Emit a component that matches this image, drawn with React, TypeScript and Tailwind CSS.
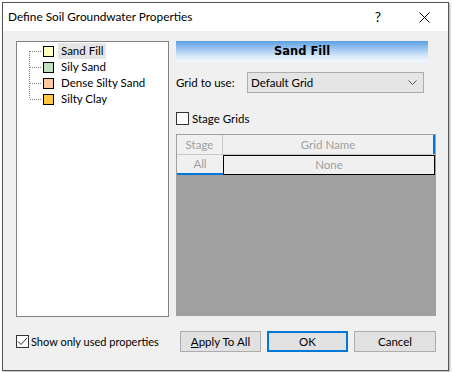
import React from "react";

const F = { fontFamily: 'Lato, "Noto Sans", sans-serif' };

const items = [
  { name: "Sand Fill", color: "#ffffc0", sel: true },
  { name: "Sily Sand", color: "#c0e0c0" },
  { name: "Dense Silty Sand", color: "#ffc8a0" },
  { name: "Silty Clay", color: "#ffc840" },
];

function Connector({ first, last }: { first: boolean; last: boolean }) {
  return (
    <svg width="26" height="16" className="shrink-0">
      <line
        x1="12.5"
        y1={first ? 8 : 0}
        x2="12.5"
        y2={last ? 8 : 16}
        stroke="#808080"
        strokeWidth="1"
        strokeDasharray="1 1"
      />
      <line x1="13" y1="8.5" x2="25" y2="8.5" stroke="#808080" strokeWidth="1" strokeDasharray="1 1" />
    </svg>
  );
}

export default function App() {
  return (
    <div className="w-[452px] h-[372px] bg-white p-[2px] text-[11.5px] text-black whitespace-nowrap" style={F}>
      <div className="w-[447px] h-[369px] border border-[#555555] flex flex-col bg-[#f0f0f0] shadow-[1px_1px_2px_rgba(0,0,0,0.35)]">
        {/* Title bar */}
        <div className="h-[28px] bg-white flex items-center shrink-0">
          <div className="pl-[5px] text-[11.8px] leading-none">Define Soil Groundwater Properties</div>
          <div className="ml-auto flex items-center">
            <span className="text-[14px] leading-none mr-[38px]">?</span>
            <svg width="11" height="11" className="mr-[18px]">
              <line x1="0.5" y1="0.5" x2="10.5" y2="10.5" stroke="#000" strokeWidth="1" />
              <line x1="10.5" y1="0.5" x2="0.5" y2="10.5" stroke="#000" strokeWidth="1" />
            </svg>
          </div>
        </div>
        {/* Body */}
        <div className="flex flex-col pt-[10px] pl-[13px]">
          <div className="flex">
            {/* Tree */}
            <div className="w-[153px] h-[276px] bg-white border border-[#828282] pt-[1px] shrink-0">
              {items.map((it, i) => (
                <div key={it.name} className="flex items-center h-[16px]">
                  <Connector first={i === 0} last={i === items.length - 1} />
                  <div
                    className="w-[11px] h-[11px] border border-black shrink-0"
                    style={{ backgroundColor: it.color }}
                  />
                  <div
                    className={
                      "ml-[4px] px-[3px] h-[16px] flex items-center leading-none shrink-0 " +
                      (it.sel ? "bg-[#e5e5e5]" : "")
                    }
                  >
                    {it.name}
                  </div>
                </div>
              ))}
            </div>
            {/* Right panel */}
            <div className="ml-[7px] w-[260px] flex flex-col">
              <div className="w-[252px] h-[21px] bg-linear-to-b from-[#5c9fe2] via-[#d4e6f8] via-70% to-[#f2f8fe] flex items-center justify-center">
                <span className="font-bold text-[11.5px] leading-none" style={{ fontFamily: '"DejaVu Sans", Verdana, sans-serif' }}>
                  Sand Fill
                </span>
              </div>
              <div className="flex items-center mt-[10px] h-[21px]">
                <span className="w-[71px] leading-none">Grid to use:</span>
                <div className="w-[177px] h-[21px] bg-[#e5e5e5] border border-[#acacac] flex items-center pl-[3px] pr-[6px]">
                  <span className="leading-none">Default Grid</span>
                  <svg width="9" height="5" className="ml-auto">
                    <polyline points="0.5,0.5 4.5,4.5 8.5,0.5" fill="none" stroke="#555" strokeWidth="1" />
                  </svg>
                </div>
              </div>
              <div className="flex items-center mt-[19px] h-[13px]">
                <div className="w-[13px] h-[13px] border border-[#333333] bg-white" />
                <span className="ml-[3px] leading-none">Stage Grids</span>
              </div>
              <div className="mt-[9px] w-[260px] h-[182px] bg-[#a0a0a0] border border-[#a0a0a0] flex flex-col">
                <div className="flex h-[19px] bg-[#f0f0f0] text-[#a0a0a0]">
                  <div className="w-[46px] flex items-center justify-center border-r border-[#c8c8c8] leading-none">Stage</div>
                  <div className="flex-1 flex items-center justify-center border-r-2 border-[#0078d7] leading-none">Grid Name</div>
                </div>
                <div className="flex h-[21px] bg-[#f0f0f0] text-[#a0a0a0] border-t border-[#c8c8c8]">
                  <div className="w-[46px] flex items-center justify-center border-b-2 border-[#0078d7] leading-none">All</div>
                  <div className="flex-1 flex items-center justify-center border border-black leading-none">None</div>
                </div>
              </div>
            </div>
          </div>
          {/* Bottom */}
          <div className="flex items-center mt-[14px] h-[21px]">
            <div className="w-[164px] flex items-center">
              <div className="w-[13px] h-[13px] border border-[#333333] bg-white flex items-center justify-center">
                <svg width="11" height="9">
                  <polyline points="1,4.5 4,7.5 10,1" fill="none" stroke="#333" strokeWidth="1" />
                </svg>
              </div>
              <span className="ml-[2px] leading-none text-[11px]">Show only used properties</span>
            </div>
            <button className="w-[81px] h-[21px] bg-[#e1e1e1] border border-[#adadad] flex items-center justify-center leading-none">
              <span><span className="underline">A</span>pply To All</span>
            </button>
            <button className="ml-[6px] w-[81px] h-[21px] bg-[#e1e1e1] border-2 border-[#0078d7] flex items-center justify-center leading-none">
              OK
            </button>
            <button className="ml-[6px] w-[82px] h-[21px] bg-[#e1e1e1] border border-[#adadad] flex items-center justify-center leading-none">
              Cancel
            </button>
          </div>
        </div>
      </div>
    </div>
  );
}
